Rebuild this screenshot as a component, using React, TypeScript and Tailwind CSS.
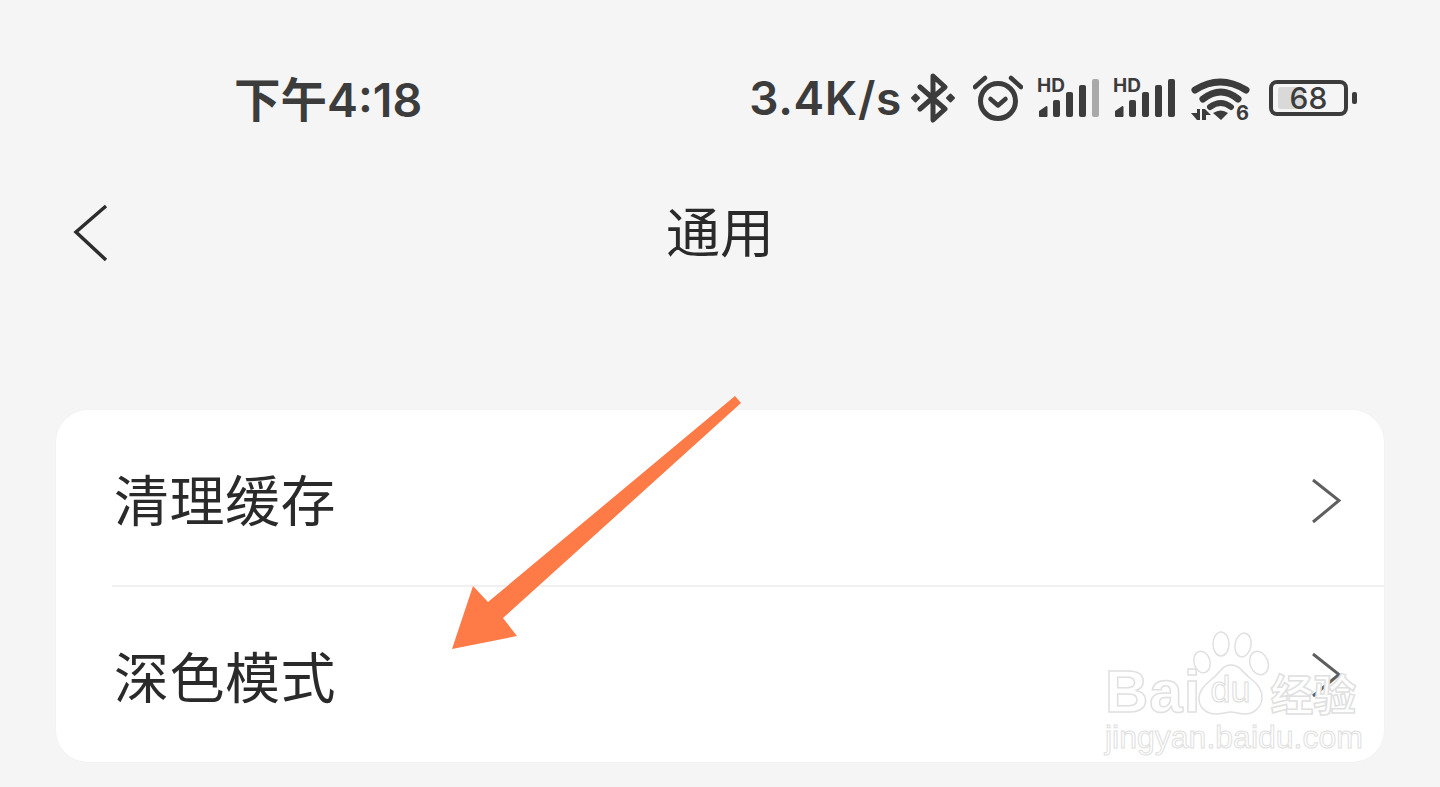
import React from 'react';

const cjk = "font-['Noto_Sans_CJK_SC','Noto_Sans',sans-serif]";

const SignalIcon = ({ lastBarColor = '#3c3c3c' }: { lastBarColor?: string }) => (
  <svg className="mt-[-6px]" width="62" height="48" viewBox="0 -6 62 48">
    <text x="0" y="15" fontFamily="Inter, sans-serif" fontWeight="700" fontSize="19" fill="#3c3c3c">HD</text>
    <path d="M3 39v-4.5L9.500 30v9z" fill="#3c3c3c" stroke="#3c3c3c" strokeWidth="2" strokeLinejoin="round" />
    <rect x="16" y="23" width="7" height="17" rx="2" fill="#3c3c3c" />
    <rect x="29" y="15" width="7" height="25" rx="2" fill="#3c3c3c" />
    <rect x="42" y="8" width="7" height="32" rx="2" fill="#3c3c3c" />
    <rect x="55" y="2" width="7" height="38" rx="2" fill={lastBarColor} />
  </svg>
);

const BluetoothIcon = () => (
  <svg width="46" height="50" viewBox="0 0 46 50" fill="none" stroke="#3c3c3c" strokeWidth="5" strokeLinejoin="round" strokeLinecap="round">
    <path d="M10 14l25 22-12 11V3l12 11-25 22" />
    <path d="M2 25l3.500-3.500L9 25l-3.500 3.500z" fill="#3c3c3c" strokeWidth="2" />
    <path d="M37 25l3.500-3.500L44 25l-3.500 3.500z" fill="#3c3c3c" strokeWidth="2" />
  </svg>
);

const AlarmIcon = () => (
  <svg width="50" height="46" viewBox="0 0 50 46" fill="none" stroke="#3c3c3c" strokeLinecap="round" strokeLinejoin="round">
    <circle cx="25" cy="26" r="17.500" strokeWidth="5" />
    <path d="M17.500 24l7.500 6.500 7.500-6.500" strokeWidth="4.500" />
    <path d="M2 12L12 3" strokeWidth="4.500" />
    <path d="M48 12L38 3" strokeWidth="4.500" />
  </svg>
);

const WifiIcon = () => (
  <svg width="60" height="50" viewBox="0 0 60 50" fill="none">
    <path d="M4 15Q29-1 55 15" stroke="#3c3c3c" strokeWidth="7" strokeLinecap="round" />
    <path d="M12 24Q30 10 47 24" stroke="#3c3c3c" strokeWidth="7" strokeLinecap="round" />
    <path d="M19 32Q30 24 40 32" stroke="#3c3c3c" strokeWidth="6" strokeLinecap="round" />
    <path d="M22 38Q30 33 37 38L30 45z" fill="#3c3c3c" />
    <path d="M0 38h6v-4h3v11H6l-6-7zM11 34h3l6 6h-5v5h-4z" fill="#3c3c3c" />
    <text x="45" y="45" fontFamily="Inter, sans-serif" fontWeight="700" fontSize="20" fill="#3c3c3c">6</text>
  </svg>
);

const BatteryIcon = () => (
  <div className="flex items-center gap-[4px]">
    <div className="relative flex h-[36px] w-[79px] items-center justify-center rounded-[8px] border-[4px] border-[#3c3c3c]">
      <div className="absolute left-[5px] top-[3px] h-[22px] w-[26px] rounded-[3px] bg-[#d9d9d9]" />
      <span className="relative font-['Inter',sans-serif] text-[30px] font-medium leading-none text-[#3c3c3c]">68</span>
    </div>
    <div className="h-[12px] w-[5px] rounded-[2px] bg-[#3c3c3c]" />
  </div>
);

const Chevron = ({ color = '#5f5f5f' }: { color?: string }) => (
  <svg width="30" height="46" viewBox="0 0 30 46" fill="none" stroke={color} strokeWidth="3">
    <path d="M2 2l26 20.500L2 44" />
  </svg>
);

const Row = ({ label, chevronClass }: { label: string; chevronClass: string }) => (
  <div className="flex h-[175px] items-center justify-between pl-[58px] pr-[43px]">
    <span className="text-[55px] leading-none tracking-[0.5px] text-[#2a2a2a]">{label}</span>
    <div className={chevronClass}><Chevron /></div>
  </div>
);

const Watermark = () => (
  <div className="absolute left-[1049px] top-[217px] w-[265px] select-none">
    <div className="flex h-[90px] items-end">
      <span className="font-['Liberation_Sans',sans-serif] text-[60px] font-bold leading-[50px] tracking-[1px] text-white [-webkit-text-stroke:1.500px_#e0e0e0]">Bai</span>
      <div className="relative ml-[-10px] h-[86px] w-[80px]">
        <svg width="80" height="86" viewBox="0 0 80 86" fill="white" stroke="#e0e0e0" strokeWidth="1.500">
          <ellipse cx="11" cy="31" rx="8" ry="11" transform="rotate(-15 11 31)" />
          <ellipse cx="30" cy="13" rx="8" ry="12" />
          <ellipse cx="52" cy="14" rx="8" ry="12" transform="rotate(10 52 14)" />
          <ellipse cx="68" cy="32" rx="9" ry="12" transform="rotate(-20 68 32)" />
          <path d="M40 34c9 0 12 8 19 13 8 6 13 12 12 21-1 9-9 15-17 15-6 0-9-2-14-2s-9 2-15 2C16 83 8 77 8 68c0-9 6-14 13-20 8-6 10-14 19-14z" />
        </svg>
        <span className="absolute bottom-[9px] left-[19px] font-['Liberation_Sans',sans-serif] text-[36px] leading-none text-white [-webkit-text-stroke:1px_#dcdcdc]">du</span>
      </div>
      <span className="ml-[-1px] whitespace-nowrap font-['Noto_Sans_CJK_SC',sans-serif] text-[43px] font-bold leading-[50px] text-white [-webkit-text-stroke:1.500px_#e0e0e0]">经验</span>
    </div>
    <div className="mt-[2px] whitespace-nowrap font-['Liberation_Sans',sans-serif] text-[32px] leading-[36px] text-white [-webkit-text-stroke:1px_#e0e0e0]">jingyan.baidu.com</div>
  </div>
);

const Arrow = () => (
  <svg className="absolute left-[452px] top-[396px]" width="290" height="254" viewBox="452 396 290 254">
    <path d="M735 396L741 403L503 618L517 636L452 649L473 586L488 602Z" fill="#fe7a46" />
  </svg>
);

export default function App() {
  return (
    <div className={`relative h-[787px] w-[1440px] overflow-hidden bg-[#f5f5f5] ${cjk}`}>
      {/* status bar */}
      <div className="flex h-[126px] items-end justify-between pb-[1px] pl-[234px] pr-[83px]">
        <span className="mb-[1px] font-['Inter','Noto_Sans_CJK_SC',sans-serif] text-[46.500px] font-semibold leading-[48px] text-[#3c3c3c]">下午4:18</span>
        <div className="flex items-center">
          <span className="mr-[8px] font-['Inter',sans-serif] text-[46px] font-semibold leading-[48px] tracking-[0.7px] text-[#3c3c3c]">3.4K/s</span>
          <BluetoothIcon />
          <div className="ml-[17px]"><AlarmIcon /></div>
          <div className="ml-[14px]"><SignalIcon lastBarColor="#a9a9a9" /></div>
          <div className="ml-[14px]"><SignalIcon /></div>
          <div className="ml-[16px] mt-[4px]"><WifiIcon /></div>
          <div className="ml-[18px]"><BatteryIcon /></div>
        </div>
      </div>

      {/* title bar */}
      <div className="relative mt-[64px] flex h-[80px] items-center justify-center">
        <div className="absolute left-[73px] top-[14px]">
          <svg width="36" height="58" viewBox="0 0 36 58" fill="none" stroke="#2d2d2d" strokeWidth="3.500">
            <path d="M33 2L3 28l30 28" />
          </svg>
        </div>
        <span className="text-[54px] leading-none text-[#2a2a2a]">通用</span>
      </div>

      {/* list card */}
      <div className="relative mx-[56px] mt-[140px] overflow-hidden rounded-[32px] bg-white shadow-[0_0_2px_rgba(0,0,0,0.04)]">
        <Row label="清理缓存" chevronClass="mt-[6px]" />
        <div className="ml-[56px] h-[2px] bg-[#f0f0f0]" />
        <Row label="深色模式" chevronClass="mt-[1px]" />
        <Watermark />
      </div>

      <Arrow />
    </div>
  );
}
